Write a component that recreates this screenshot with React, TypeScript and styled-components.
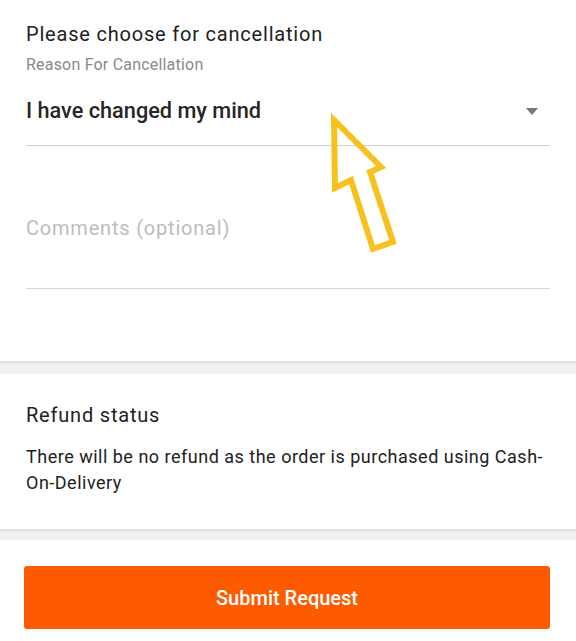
import styled, { createGlobalStyle } from 'styled-components'

const GlobalStyle = createGlobalStyle`
	html, body {
		margin: 0;
		padding: 0;
		background: #f1f1f1;
	}
	body {
		font-family: Roboto, 'Liberation Sans', Arial, sans-serif;
		color: #212121;
	}
`

const Page = styled.div`
	position: relative;
	width: 576px;
	height: 641px;
	overflow: hidden;
	background: #f1f1f1;
	display: flex;
	flex-direction: column;
`

const Card = styled.section<{ $top: number; $bottom: number; $gap?: number }>`
	background: #fff;
	padding: ${p => p.$top}px 26px ${p => p.$bottom}px;
	margin-bottom: ${p => p.$gap ?? 0}px;
	box-shadow: 0 2px 3px rgba(0, 0, 0, 0.08);
`

const Title = styled.h2`
	margin: 0;
	font-size: 20px;
	line-height: 24px;
	font-weight: 400;
	letter-spacing: 0.8px;
	color: #212121;
`

const Hint = styled.div`
	margin-top: 9px;
	font-size: 16px;
	line-height: 19px;
	letter-spacing: 0.2px;
	color: #8a8a8a;
`

const SelectField = styled.div`
	height: 72px;
	box-sizing: border-box;
	padding-top: 3px;
	display: flex;
	align-items: center;
	justify-content: space-between;
	border-bottom: 1px solid #cfcfcf;
`

const SelectValue = styled.span`
	font-size: 21.7px;
	line-height: 26px;
	font-weight: 500;
	color: #262626;
`

const Caret = styled.span`
	width: 0;
	height: 0;
	margin-right: 12px;
	border-left: 6px solid transparent;
	border-right: 6px solid transparent;
	border-top: 7px solid #777;
`

const CommentsField = styled.div`
	height: 143px;
	box-sizing: border-box;
	padding-top: 70px;
	border-bottom: 1px solid #d6d6d6;
	font-size: 20px;
	line-height: 24px;
	letter-spacing: 0.8px;
	color: #bdbdbd;
`

const Body = styled.p`
	margin: 17px 0 0;
	font-size: 18px;
	line-height: 26px;
	letter-spacing: 0.5px;
	color: #212121;
`

const Footer = styled.div`
	flex: 1;
	margin-top: 11px;
	background: #fff;
	padding: 26px 26px 0 24px;
`

const SubmitButton = styled.button`
	width: 100%;
	height: 63px;
	border: none;
	border-radius: 3px;
	background: #fe5a00;
	color: #fff;
	font-family: Roboto, 'Liberation Sans', Arial, sans-serif;
	font-size: 20px;
	font-weight: 500;
	cursor: pointer;
`

const ArrowMark = styled.svg`
	position: absolute;
	left: 0;
	top: 0;
	pointer-events: none;
`

const App = () => {
	return (
		<>
			<GlobalStyle />
			<Page>
				<Card $top={22} $bottom={72} $gap={13}>
					<Title>Please choose for cancellation</Title>
					<Hint>Reason For Cancellation</Hint>
					<SelectField>
						<SelectValue>I have changed my mind</SelectValue>
						<Caret />
					</SelectField>
					<CommentsField>Comments (optional)</CommentsField>
				</Card>
				<Card $top={29} $bottom={33}>
					<Title>Refund status</Title>
					<Body>
						There will be no refund as the order is purchased using Cash-On-Delivery
					</Body>
				</Card>
				<Footer>
					<SubmitButton type='button'>Submit Request</SubmitButton>
				</Footer>
				<ArrowMark width='576' height='641' viewBox='0 0 576 641'>
					<polygon
						points='334,120 335,188 351,180 373,249 393,242 370,172 381,167'
						fill='none'
						stroke='#f8c21e'
						strokeWidth='6'
						strokeLinejoin='miter'
					/>
				</ArrowMark>
			</Page>
		</>
	)
}

export default App
